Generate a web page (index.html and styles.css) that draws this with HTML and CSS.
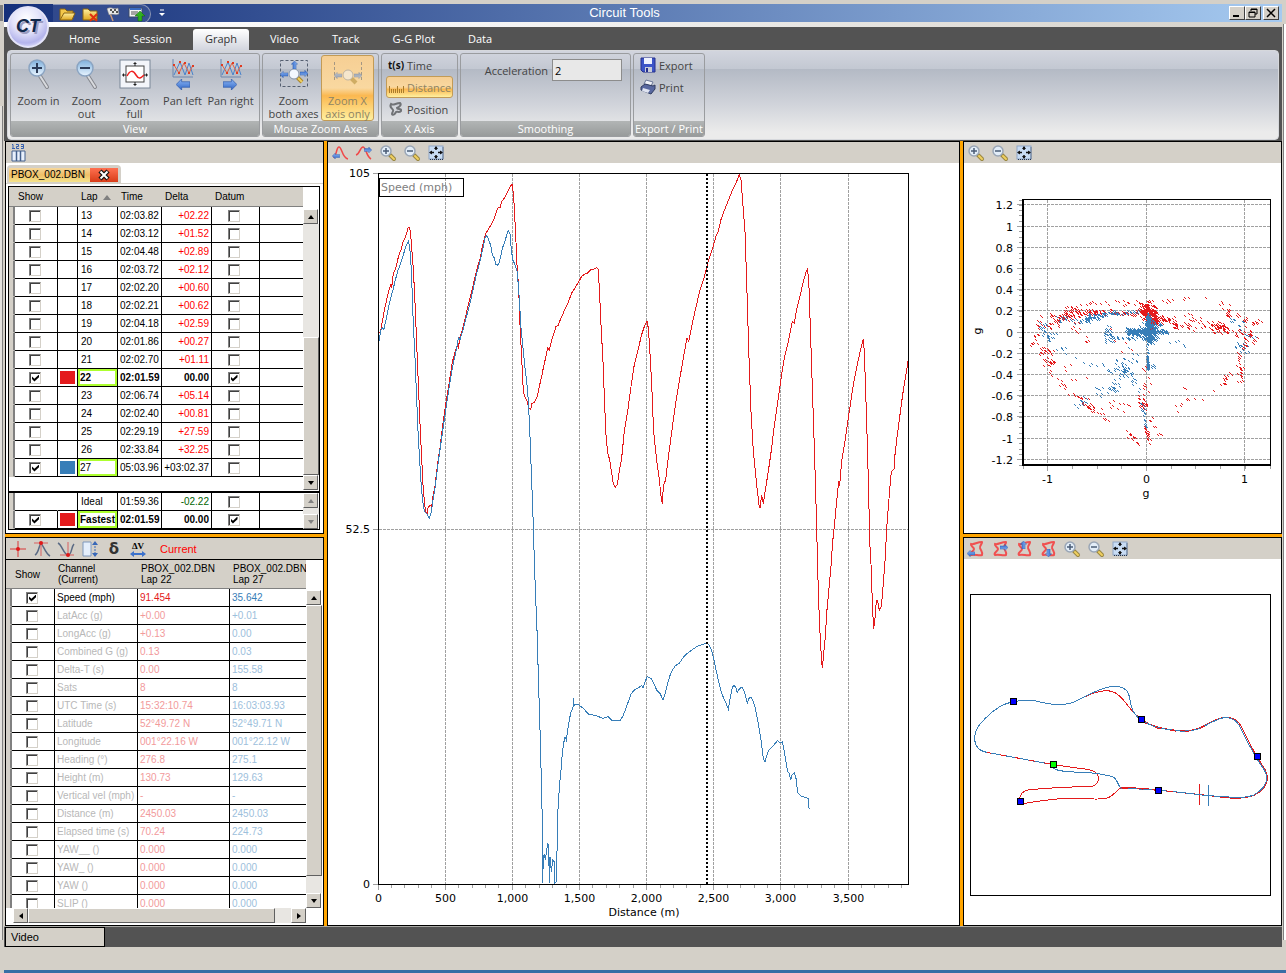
FILE: index.html
```html
<!DOCTYPE html>
<html lang="en">
<head>
  <meta charset="UTF-8" />
  <title>Circuit Tools</title>
  <link rel="stylesheet" href="styles.css">
</head>
<body>
  <!-- Shared icons -->
  <svg class="icon-defs" aria-hidden="true">
    <defs>
      <linearGradient id="g-lens" x1="0" y1="0" x2="0" y2="1"><stop offset="0" stop-color="#7fb0dc"/><stop offset="1" stop-color="#e8f4ff"/></linearGradient>
      <linearGradient id="g-blue" x1="0" y1="0" x2="0" y2="1"><stop offset="0" stop-color="#8fb8f4"/><stop offset="1" stop-color="#2f66c8"/></linearGradient>
      <linearGradient id="g-folder" x1="0" y1="0" x2="0" y2="1"><stop offset="0" stop-color="#fff0a0"/><stop offset="1" stop-color="#e0a820"/></linearGradient>
      <radialGradient id="g-orb" cx="0.45" cy="0.3" r="0.75"><stop offset="0" stop-color="#ffffff"/><stop offset="0.45" stop-color="#e4e4fa"/><stop offset="0.8" stop-color="#b4b4ec"/><stop offset="1" stop-color="#e8e8ff"/></radialGradient>
    </defs>
    <symbol id="i-big-lens" viewBox="0 0 32 32">
      <path d="M17 18l7 11" stroke="#85878d" stroke-width="4" stroke-linecap="round"/>
      <path d="M17 18l7 11" stroke="#d8dade" stroke-width="2" stroke-linecap="round"/>
      <circle cx="14" cy="10" r="8" fill="url(#g-lens)" stroke="#8ba4c2" stroke-width="1.500"/>
    </symbol>
    <symbol id="i-lens" viewBox="0 0 18 18">
      <path d="M11 11l4 4" stroke="#9a8740" stroke-width="4" stroke-linecap="round"/>
      <path d="M12 12l3 3" stroke="#f0d060" stroke-width="2" stroke-linecap="round"/>
      <circle cx="7" cy="7" r="5" fill="#e2edf8" stroke="#9aa6b6" stroke-width="1.500"/>
    </symbol>
    <symbol id="i-zoom-in" viewBox="0 0 18 18"><use href="#i-lens"/><path d="M4 7h6M7 4v6" stroke="#4a5c76" stroke-width="1.500"/></symbol>
    <symbol id="i-zoom-out" viewBox="0 0 18 18"><use href="#i-lens"/><path d="M4 7h6" stroke="#4a5c76" stroke-width="1.500"/></symbol>
    <symbol id="i-fit" viewBox="0 0 18 18">
      <rect x="2" y="2" width="14" height="13" fill="#c8dcf4" stroke="#8fa6c6"/>
      <path d="M3 15.500h13v-13" fill="none" stroke="#1f3350" stroke-dasharray="1 1"/>
      <path d="M9 3v3M9 11v3M3 8.500h4M11 8.500h4" stroke="#111" stroke-width="1.500"/>
      <path d="M9 2l2 3H7zM9 15l2-3H7zM2 8.500l3-2v4zM16 8.500l-3-2v4z" fill="#111"/>
    </symbol>
    <symbol id="i-track" viewBox="0 0 18 18">
      <path d="M4 4c3 1 6-2 11-2c1 1-3 4-2 6c1 3 3 4 2 7c-3 1-7-1-11 0c-2-2 3-4 3-6c0-2-4-3-3-5z" fill="none" stroke="#f05050" stroke-width="2"/>
    </symbol>
    <symbol id="i-arrow" viewBox="0 0 10 8"><path d="M0 4l4-4v2h6v4H4v2z" fill="url(#g-blue)" stroke="#2b58a8" stroke-width=".5"/></symbol>
    <symbol id="i-pan-graph" viewBox="0 0 24 20">
      <path d="M2 0v18h20" fill="none" stroke="#6f87ae"/>
      <path d="M3 16l6-13l5 13l4-12l4 12" fill="none" stroke="#4a84cc"/>
      <path d="M3 6l5 8l5-10l5 10l4-8" fill="none" stroke="#e06040"/>
      <path d="M2 5h2v2H2zM7 13h2v2H7zM13 3h2v2h-2zM17 13h2v2h-2zM21 6h2v2h-2zM8 2h2v2H8z" fill="#e03a20"/>
    </symbol>
  </svg>

  <header class="titlebar">
    <nav class="quick">
      <button type="button" aria-label="Open"><svg viewBox="0 0 17 16"><path d="M1 14V3h5l2 2h6v3" fill="#f4c84a" stroke="#8a6410"/><path d="M1 14l4-7h11l-3 7z" fill="url(#g-folder)" stroke="#8a6410"/></svg></button>
      <button type="button" aria-label="Close file"><svg viewBox="0 0 17 16"><path d="M1 14V3h5l2 2h7v9z" fill="url(#g-folder)" stroke="#8a6410"/><path d="M8 8l7 7M15 8l-7 7" stroke="#e03010" stroke-width="2"/></svg></button>
      <button type="button" aria-label="Start line"><svg viewBox="0 0 17 16"><path d="M3 2l5 13" stroke="#c89878" stroke-width="1.500"/><path d="M2 3c4-3 6 1 11-1l1 6c-4 2-6-1-10 1z" fill="#e8e8e8" stroke="#777" stroke-width=".5"/><path d="M5 3h2v2H5zM9 3h2v2H9zM7 5h2v2H7zM11 5h2v2h-2z" fill="#555"/></svg></button>
      <button type="button" aria-label="Export list"><svg viewBox="0 0 17 16"><rect x="1" y="2" width="13" height="9" fill="#f4f4f4" stroke="#3a4a68"/><path d="M2 3h11" stroke="#3a6ac0" stroke-width="2"/><path d="M3 6h7M3 8h6" stroke="#555"/><path d="M12 5l5 5h-3v5h-4v-5H7z" fill="#30b020" stroke="#106008" stroke-width=".5"/></svg></button>
    </nav>
    <button class="quick-more" type="button" aria-label="Customise"><svg viewBox="0 0 8 8"><path d="M2 1h4" stroke="#fff"/><path d="M1 4h6l-3 3z" fill="#fff"/></svg></button>
    <h1>Circuit Tools</h1>
    <div class="win-buttons">
      <button type="button" aria-label="Minimise"><svg viewBox="0 0 12 10"><path d="M2 8h6" stroke="#000" stroke-width="2"/></svg></button>
      <button type="button" aria-label="Restore"><svg viewBox="0 0 12 10"><path d="M4 3V1h6v5H8M4 1.500h6M2 9V4h6v5zM2 4.500h6" fill="none" stroke="#000"/></svg></button>
      <button class="win-close" type="button" aria-label="Close"><svg viewBox="0 0 12 10"><path d="M2 1l8 8M10 1l-8 8" stroke="#000" stroke-width="1.500"/></svg></button>
    </div>
  </header>
  <button class="orb" type="button" aria-label="Application menu">
    <svg viewBox="0 0 42 42">
      <circle cx="21" cy="21" r="20" fill="url(#g-orb)" stroke="#e4e4f8" stroke-width="2"/>
      <text x="23" y="28" class="orb-shadow">CT</text>
      <text x="21" y="26" class="orb-text">CT</text>
    </svg>
  </button>
  <div class="glow"></div>

  <nav class="tabs">
    <button type="button">Home</button>
    <button type="button">Session</button>
    <button type="button" class="active">Graph</button>
    <button type="button">Video</button>
    <button type="button">Track</button>
    <button type="button">G-G Plot</button>
    <button type="button">Data</button>
  </nav>

  <div class="ribbon-wrap">
    <div class="ribbon">
      <section class="group view">
        <div class="tools">
          <button class="big" type="button"><svg viewBox="0 0 32 32"><use href="#i-big-lens"/><path d="M9 10h10M14 5v10" stroke="#2c3c58" stroke-width="2"/></svg><span>Zoom in</span></button>
          <button class="big" type="button"><svg viewBox="0 0 32 32"><use href="#i-big-lens"/><path d="M9 10h10" stroke="#2c3c58" stroke-width="2"/></svg><span>Zoom out</span></button>
          <button class="big" type="button"><svg viewBox="0 0 32 32"><rect x="1" y="2" width="30" height="28" fill="#f3f5fa" stroke="#7b8798"/><rect x="7" y="8" width="18" height="16" fill="#fff" stroke="#444"/><path d="M8 18c3-6 6-6 9-1s5 3 8 0" fill="none" stroke="#f02020" stroke-width="1.500"/><path d="M16 4v4M16 24v4M3 17h4M25 17h4M14.500 5.500h3M14.500 26.500h3M4.500 15.500v3M27.500 15.500v3" stroke="#222"/></svg><span>Zoom full</span></button>
          <button class="big" type="button"><svg viewBox="0 0 32 32"><use href="#i-pan-graph" x="4" y="1" width="24" height="20"/><use href="#i-arrow" x="9" y="21" width="14" height="11"/></svg><span>Pan left</span></button>
          <button class="big" type="button"><svg viewBox="0 0 32 32"><use href="#i-pan-graph" x="4" y="1" width="24" height="20"/><g transform="translate(22 21) scale(-1 1)"><use href="#i-arrow" width="14" height="11"/></g></svg><span>Pan&nbsp;right</span></button>
        </div>
        <h2>View</h2>
      </section>
      <section class="group mouse">
        <div class="tools">
          <button class="big wide" type="button"><svg viewBox="0 0 32 32"><rect x="2.500" y="2.500" width="27" height="26" fill="none" stroke="#555f70" stroke-dasharray="3 2"/><path d="M19 19l5 5" stroke="#a8842a" stroke-width="4"/><path d="M20 20l4 4" stroke="#f0d060" stroke-width="2"/><circle cx="16" cy="16" r="5" fill="#f4f8ff" stroke="#8794a8"/><use href="#i-arrow" x="2" y="13" width="8" height="7"/><g transform="rotate(180 26 16)"><use href="#i-arrow" x="22" y="13" width="8" height="7"/></g><g transform="rotate(90 16 7)"><use href="#i-arrow" x="12" y="3" width="8" height="7"/></g></svg><span>Zoom both axes</span></button>
          <button class="big wide on" type="button"><svg viewBox="0 0 32 32"><path d="M2.500 4v18M29.500 4v18" stroke="#555f70" stroke-dasharray="3 2"/><path d="M19 20l5 5" stroke="#a8842a" stroke-width="4"/><circle cx="16" cy="17" r="5" fill="#f4f8ff" stroke="#8794a8"/><use href="#i-arrow" x="2" y="14" width="8" height="7"/><g transform="rotate(180 26 17)"><use href="#i-arrow" x="22" y="13" width="8" height="7"/></g></svg><span>Zoom X axis only</span></button>
        </div>
        <h2>Mouse Zoom Axes</h2>
      </section>
      <section class="group xaxis">
        <div class="stack">
          <button type="button"><b class="ts">t(s)</b>Time</button>
          <button type="button" class="on"><svg viewBox="0 0 16 16"><path d="M1.500 7v7M3.500 10v4M5.500 10v4M7.500 10v4M9.500 7v7M11.500 10v4M13.500 10v4M15.500 7v7" fill="none" stroke="#a87c2c"/></svg>Distance</button>
          <button type="button"><svg viewBox="0 0 16 16"><path d="M3 3c2 2 5-1 9-1c2 2-1 4-3 5c0 2 5 0 4 3c-2 2-4 0-5 1c-1 2-3 4-4 2c0-2 2-3 1-4c-1-2-4-3-2-6z" fill="none" stroke="#707276" stroke-width="2"/></svg>Position</button>
        </div>
        <h2>X Axis</h2>
      </section>
      <section class="group smooth">
        <div class="field">
          <label for="accel">Acceleration</label>
          <input id="accel" type="text" value="2">
        </div>
        <h2>Smoothing</h2>
      </section>
      <section class="group export">
        <div class="stack">
          <button type="button"><svg viewBox="0 0 16 16"><path d="M1 1h14v14H3l-2-2z" fill="#3c55c8" stroke="#26308c"/><path d="M4 1h8v6H4z" fill="#eef2ff"/><path d="M5 10h7v5H5z" fill="#c8ccd8"/><path d="M6 11h2v4H6z" fill="#26308c"/></svg>Export</button>
          <button type="button"><svg viewBox="0 0 16 16"><path d="M6 1l7 2l-2 4l-7-2z" fill="#f0f2f8" stroke="#6b7898"/><path d="M1 8l4-3l8 2l2-1v4l-4 5l-10-4z" fill="#5868a0" stroke="#303c60"/><path d="M3 9l7 2l-2 3l-6-2z" fill="#dfe4f2"/></svg>Print</button>
        </div>
        <h2>Export / Print</h2>
      </section>
    </div>
  </div>

  <main>
    <section class="panel laps">
      <div class="toolbar">
        <button type="button" aria-label="Columns"><svg viewBox="0 0 18 18"><path d="M3 .5h1v3.500M3 4.500h3M7 .5h2.500v2h-2v2H10M12 .5h2.500v4H12M12 2.500h2" fill="none" stroke="#3560b0"/><path d="M3 7h13v10H3z" fill="#e8f0fc" stroke="#44608c"/><path d="M7.500 7v10M11.500 7v10" stroke="#44608c" stroke-width="1.500"/></svg></button>
      </div>
      <div class="file-tabs">
        <div class="file-tab">
          <span>PBOX_002.DBN</span>
          <button type="button" aria-label="Close tab"><svg viewBox="0 0 12 12"><path d="M2 2l8 8M10 2l-8 8" stroke="#111" stroke-width="4.500"/><path d="M2.500 2.500l7 7M9.500 2.500l-7 7" stroke="#fff" stroke-width="2"/></svg></button>
        </div>
      </div>
      <div class="lap-frame">
        <div class="lap-main">
          <table class="lap-table">
            <colgroup><col class="c-edge"><col class="c-show"><col class="c-sw"><col class="c-lap"><col class="c-time"><col class="c-delta"><col class="c-datum"><col></colgroup>
            <thead><tr><th></th><th>Show</th><th></th><th>Lap <i class="sort"></i></th><th>Time</th><th>Delta</th><th>Datum</th><th></th></tr></thead>
            <tbody id="lap-rows"></tbody>
          </table>
          <div class="vscroll under-head">
            <button type="button" class="up" aria-label="Scroll up"></button>
            <div class="track lap-track"><div class="thumb"></div></div>
            <button type="button" class="down" aria-label="Scroll down"></button>
          </div>
        </div>
        <div class="lap-foot">
          <table class="lap-table">
            <colgroup><col class="c-edge"><col class="c-show"><col class="c-sw"><col class="c-lap"><col class="c-time"><col class="c-delta"><col class="c-datum"><col></colgroup>
            <tbody id="foot-rows"></tbody>
          </table>
          <div class="vscroll off">
            <button type="button" class="up" aria-label="Scroll up" disabled></button>
            <div class="track"></div>
            <button type="button" class="down" aria-label="Scroll down" disabled></button>
          </div>
        </div>
      </div>
    </section>

    <section class="panel channels">
      <div class="toolbar">
        <button type="button" aria-label="Cursor"><svg viewBox="0 0 18 18"><path d="M1 9h16M9 1v16" stroke="#d83838"/><circle cx="9" cy="9" r="2" fill="#e01818"/></svg></button>
        <button type="button" aria-label="Maximum"><svg viewBox="0 0 18 18"><path d="M2 15c4-2 4-11 6-11s4 9 9 12" fill="none" stroke="#5a6a84" stroke-width="1.500"/><path d="M1 3h14M8 3v13" stroke="#d86060"/><circle cx="8" cy="3" r="2" fill="#e01818"/></svg></button>
        <button type="button" aria-label="Minimum"><svg viewBox="0 0 18 18"><path d="M1 3c4 2 6 12 10 12s3-8 6-11" fill="none" stroke="#5a6a84" stroke-width="1.500"/><path d="M3 15h14M11 2v14" stroke="#d86060"/><circle cx="11" cy="15" r="2" fill="#e01818"/></svg></button>
        <button type="button" aria-label="Range"><svg viewBox="0 0 18 18"><path d="M2 2h8v14H2z" fill="#e4eefb" stroke="#7f98bc"/><path d="M14 3v12" stroke="#3868b8" stroke-dasharray="2 1"/><path d="M14 1l3 4h-6zM14 17l3-4h-6z" fill="#3868b8"/></svg></button>
        <button type="button" class="delta-btn">δ</button>
        <button type="button" class="dv-btn">ΔV<svg viewBox="0 0 16 6"><path d="M0 3l4-3v2h8V0l4 3l-4 3V4H4v2z" fill="#3c72cc"/></svg></button>
        <span class="current">Current</span>
      </div>
      <div class="chan-body">
        <div class="chan-main">
          <div class="chan-clip">
            <table class="chan-table">
              <colgroup><col class="c-edge"><col class="c-show"><col class="c-name"><col class="c-v1"><col></colgroup>
              <thead><tr><th></th><th>Show</th><th>Channel<br>(Current)</th><th>PBOX_002.DBN<br>Lap 22</th><th>PBOX_002.DBN<br>Lap 27</th></tr></thead>
              <tbody id="chan-rows"></tbody>
            </table>
          </div>
          <div class="vscroll under-chan">
            <button type="button" class="up" aria-label="Scroll up"></button>
            <div class="track chan-track"><div class="thumb"></div></div>
            <button type="button" class="down" aria-label="Scroll down"></button>
          </div>
        </div>
        <div class="hscroll">
          <button type="button" class="left" aria-label="Scroll left"></button>
          <div class="track"><div class="thumb"></div></div>
          <button type="button" class="right" aria-label="Scroll right"></button>
        </div>
      </div>
    </section>

    <section class="panel speed">
      <div class="toolbar">
        <button type="button" aria-label="Previous peak"><svg viewBox="0 0 18 18"><path d="M2 13c4 0 3-10 6-10s3 11 9 12" fill="none" stroke="#f04848" stroke-width="1.500"/><use href="#i-arrow" x="1" y="9" width="8" height="6"/></svg></button>
        <button type="button" aria-label="Next peak"><svg viewBox="0 0 18 18"><path d="M1 11c4-1 4-8 7-8s3 9 8 12" fill="none" stroke="#f04848" stroke-width="1.500"/><g transform="rotate(180 13 6)"><use href="#i-arrow" x="9" y="3" width="8" height="6"/></g></svg></button>
        <button type="button" aria-label="Zoom in"><svg><use href="#i-zoom-in"/></svg></button>
        <button type="button" aria-label="Zoom out"><svg><use href="#i-zoom-out"/></svg></button>
        <button type="button" aria-label="Zoom full"><svg><use href="#i-fit"/></svg></button>
      </div>
      <svg class="plot" id="speed-plot" viewBox="328 163 631 762">
        <g id="speed-grid"></g>
        <rect x="379" y="178" width="84" height="18" class="label-box"/>
        <text x="381" y="191" class="muted">Speed (mph)</text>
        <g transform="translate(325 138) scale(.33333)">
          <polyline class="trace red" points="163,585 167,578 172,550 178,518 184,490 189,468 194,450 198,438 200,450 203,420 207,402 213,388 218,365 224,345 229,335 233,315 240,300 245,285 250,268 254,270 257,290 260,330 264,380 268,450 272,540 276,640 281,760 286,880 290,960 294,1040 299,1100 303,1122 306,1128 310,1106 315,1103 320,1105 324,1075 330,1045 338,975 345,930 352,870 362,800 372,738 382,672 392,635 397,620 400,632 404,602 412,575 422,535 430,500 440,462 448,425 456,392 466,360 472,325 482,288 492,270 500,258 508,240 515,220 520,207 525,210 530,190 540,178 548,160 556,146 561,138 565,165 568,210 572,290 576,380 581,450 585,560 590,660 595,760 600,778 607,790 611,812 617,814 621,796 629,792 636,778 642,750 650,715 657,680 663,655 668,630 673,637 680,605 688,582 693,565 700,562 706,545 715,525 722,508 730,492 740,465 750,450 762,430 770,415 780,408 788,405 798,394 808,393 815,388 819,393 823,450 828,560 834,670 839,800 843,890 848,945 854,965 860,1005 865,1038 870,1048 877,1040 882,1005 890,960 898,880 908,820 916,760 926,690 938,640 950,590 960,560 966,550 969,565 973,610 978,700 983,800 985,870 990,920 996,975 1003,1025 1008,1075 1012,1097 1015,1045 1022,1025 1028,975 1035,920 1043,860 1053,790 1063,730 1075,660 1086,600 1091,610 1097,580 1110,520 1125,455 1137,420 1148,375 1160,340 1173,295 1180,280 1188,245 1200,212 1213,180 1225,150 1235,130 1243,110 1248,125 1253,190 1260,280 1265,430 1272,660 1278,820 1285,940 1295,1040 1302,1100 1305,1110 1310,1072 1315,1097 1320,1062 1330,1000 1340,930 1347,870 1360,780 1370,710 1377,665 1390,610 1402,550 1408,555 1415,515 1425,475 1435,430 1443,403 1447,395 1451,420 1456,570 1462,750 1468,930 1472,1060 1475,1170 1479,1326 1482,1416 1486,1506 1489,1556 1492,1591 1496,1546 1501,1496 1505,1426 1512,1351 1518,1286 1523,1211 1528,1165 1533,1110 1541,1030 1544,1043 1550,970 1560,910 1570,840 1585,740 1600,665 1609,625 1615,604 1618,640 1623,790 1628,950 1633,1150 1635,1226 1639,1296 1642,1396 1646,1474 1651,1431 1653,1401 1656,1386 1659,1396 1663,1416 1669,1406 1675,1336 1681,1256 1685,1170 1693,1070 1698,1010 1702,997 1707,995 1710,950 1717,890 1725,830 1733,770 1742,715 1749,670"/>
          <polyline class="trace blue" points="162,610 168,575 173,570 177,574 182,550 188,520 196,485 204,455 210,430 218,400 226,378 235,350 243,325 250,310 254,325 258,380 261,450 265,560 270,660 274,760 280,900 286,1000 290,1060 296,1110 300,1122 305,1126 309,1135 313,1140 318,1125 322,1100 330,1050 340,970 350,900 360,830 372,750 384,680 394,635 400,600 405,605 414,575 424,537 434,500 444,455 454,410 464,375 474,330 480,300 484,292 490,302 497,322 502,350 508,360 512,378 517,382 522,376 528,350 533,328 540,310 546,287 550,278 555,288 558,325 563,365 570,380 576,400 580,440 584,500 588,570 594,630 600,690 606,740 610,790 613,850 616,920 620,1030 623,1100 626,1206 628,1266 631,1356 636,1476 641,1646 646,1806 651,2006 653,2236 655,2156 658,2151 661,2166 665,2136 668,2116 671,2126 673,2236 675,2156 679,2201 683,2166 688,2171 690,2236 694,2231 696,2144 698,2026 701,1986 703,1946 708,1896 712,1846 716,1816 720,1796 724,1806 728,1776 733,1746 738,1721 744,1709 745,1681 746,1706 750,1698 762,1701 775,1711 790,1728 800,1730 815,1734 835,1741 850,1736 862,1748 885,1748 893,1736 903,1711 910,1691 918,1668 928,1656 940,1649 950,1643 954,1649 960,1631 967,1616 978,1621 987,1638 995,1656 1005,1666 1014,1686 1020,1669 1028,1636 1037,1606 1050,1584 1063,1576 1075,1558 1087,1546 1103,1534 1120,1523 1145,1516 1153,1521 1162,1544 1170,1581 1180,1626 1190,1666 1203,1696 1210,1713 1217,1671 1223,1646 1228,1642 1233,1651 1237,1664 1244,1651 1251,1648 1258,1661 1267,1696 1273,1679 1280,1679 1290,1706 1300,1756 1308,1806 1315,1861 1320,1871 1330,1838 1343,1826 1357,1808 1365,1814 1372,1812 1379,1846 1388,1901 1393,1906 1397,1926 1401,1912 1408,1904 1413,1921 1418,1964 1427,1974 1450,1981 1451,2009 1455,2011"/>
        </g>
        <path d="M707 174v710" class="cursor"/>
        <text x="644" y="916" class="mid">Distance (m)</text>
      </svg>
    </section>

    <section class="panel gg">
      <div class="toolbar">
        <button type="button" aria-label="Zoom in"><svg><use href="#i-zoom-in"/></svg></button>
        <button type="button" aria-label="Zoom out"><svg><use href="#i-zoom-out"/></svg></button>
        <button type="button" aria-label="Zoom full"><svg><use href="#i-fit"/></svg></button>
      </div>
      <svg class="plot" viewBox="964 163 317 370">
        <g id="gg-grid"></g>
        <path id="gg-red" class="dots red"/>
        <path id="gg-blue" class="dots blue"/>
        <text x="1146" y="497" class="mid">g</text>
        <text transform="translate(981 331) rotate(-90)" class="mid">g</text>
      </svg>
    </section>

    <section class="panel map">
      <div class="toolbar">
        <button type="button" aria-label="Pan left"><svg viewBox="0 0 18 18"><use href="#i-track"/><use href="#i-arrow" x="0" y="10" width="8" height="7"/></svg></button>
        <button type="button" aria-label="Pan right"><svg viewBox="0 0 18 18"><use href="#i-track"/><g transform="rotate(180 13 8)"><use href="#i-arrow" x="9" y="5" width="8" height="7"/></g></svg></button>
        <button type="button" aria-label="Pan up"><svg viewBox="0 0 18 18"><use href="#i-track"/><g transform="rotate(90 9 5)"><use href="#i-arrow" x="5" y="2" width="8" height="7"/></g></svg></button>
        <button type="button" aria-label="Pan down"><svg viewBox="0 0 18 18"><use href="#i-track"/><g transform="rotate(-90 9 13)"><use href="#i-arrow" x="5" y="10" width="8" height="7"/></g></svg></button>
        <button type="button" aria-label="Zoom in"><svg><use href="#i-zoom-in"/></svg></button>
        <button type="button" aria-label="Zoom out"><svg><use href="#i-zoom-out"/></svg></button>
        <button type="button" aria-label="Zoom full"><svg><use href="#i-fit"/></svg></button>
      </div>
      <svg class="plot" viewBox="964 559 317 366">
        <rect x="970.500" y="594.500" width="300" height="301" class="map-box"/>
        <g transform="translate(960 530) scale(.33333)">
          <path class="trace red" d="M280 704L80 667C55 662 43 645 44 620C46 595 60 582 75 566C95 545 120 522 160 515C190 510 225 510 245 517C275 525 320 527 345 515C375 500 390 491 410 487C440 478 460 482 475 495C495 512 505 530 520 547L545 570C577 590 610 597 660 602C700 604 720 595 745 580C775 565 785 561 802 562C832 565 842 583 852 605C864 632 885 670 897 690C912 715 921 720 922 742C922 770 902 786 882 796C850 808 820 806 780 801C720 793 680 790 640 785C590 780 530 770 482 774C465 785 455 803 440 804C420 810 395 806 370 806L310 805C280 808 240 812 190 821L178 815C178 795 185 783 205 780C260 773 330 771 395 769C412 766 416 752 415 742C412 722 390 718 350 714L280 704M718 763V825"/>
          <path class="trace blue" d="M280 704L80 667C55 662 43 645 44 620C46 595 60 582 75 566C95 545 120 522 160 515C190 510 225 510 245 517C275 525 320 527 345 515C375 500 395 488 430 475C455 467 475 468 490 474C510 485 508 505 513 525C518 550 530 560 545 570C575 592 610 598 660 603C700 605 720 597 745 582C775 567 785 562 802 563C830 567 838 585 848 607C860 635 885 675 893 690C905 710 918 720 921 742C919 770 900 785 880 796C850 806 820 802 780 799C720 797 680 788 640 785C590 780 530 776 482 774C474 768 472 742 455 739C420 730 400 730 385 728C350 726 330 727 300 722C285 719 276 715 280 704M745 765V827"/>
          <path class="trace red overlap" d="M270 702L80 667M545 573C577 594 610 601 660 604C700 605 720 597 745 582M640 786C590 781 530 774 482 774"/>
        </g>
        <g class="marker">
          <rect x="1010.500" y="698.500" width="6" height="6"/>
          <rect x="1138.500" y="716.500" width="6" height="6"/>
          <rect x="1254.500" y="753.500" width="6" height="6"/>
          <rect x="1155.500" y="787.500" width="6" height="6"/>
          <rect x="1017.500" y="798.500" width="6" height="6"/>
          <rect x="1050.500" y="761.500" width="6" height="6" class="start"/>
        </g>
      </svg>
    </section>
  </main>

  <footer class="dock"><button type="button">Video</button></footer>
  <div class="bottom-edge"></div>

  <script src="app.js"></script>
</body>
</html>
```

FILE: styles.css
```css
* {
  box-sizing: border-box;
}

body {
  margin: 0;
  padding: 4px 4px 0;
  min-height: 100vh;
  display: flex;
  flex-direction: column;
  position: relative;
  background:
    linear-gradient(#808080, #808080) 0 5px / 3px 16px no-repeat,
    linear-gradient(to right, #e4e2de 2px, #808080 2px) 0 106px / 3px 834px no-repeat,
    linear-gradient(to right, #808080 1px, #fff 1px) right 24px / 3px 916px no-repeat,
    #d4d0c8;
  font-family: "Liberation Sans", Arial, sans-serif;
  font-size: 10px;
  color: #000;
}

button {
  font: inherit;
  color: inherit;
  padding: 0;
  border: none;
  background: none;
}

h1, h2 {
  margin: 0;
  font-weight: normal;
}

.icon-defs {
  position: absolute;
  width: 0;
  height: 0;
}

/* Title bar */
.titlebar {
  height: 18px;
  padding: 0 3px 0 49px;
  display: flex;
  align-items: center;
  background: linear-gradient(to right, #16307a, #a6caf0);
}

.quick {
  width: 98px;
  height: 20px;
  padding: 0 6px;
  display: flex;
  gap: 6px;
  align-self: flex-start;
  align-items: center;
  border: 1px solid #8c96b4;
  border-left: none;
  border-radius: 0 10px 10px 0;
  background-color: rgba(90, 110, 165, 0.35);
}

.quick button,
.quick svg {
  display: block;
  width: 17px;
  height: 16px;
}

.quick-more svg {
  display: block;
  margin-left: 7px;
  width: 8px;
  height: 8px;
}

.titlebar h1 {
  flex: 1;
  padding-right: 146px;
  text-align: center;
  font-size: 13px;
  line-height: 20px;
  color: #fff;
}

.win-buttons {
  display: flex;
}

.win-buttons button {
  width: 16px;
  height: 14px;
  background-color: #d4d0c8;
  border: 1px solid;
  border-color: #fff #404040 #404040 #fff;
}

.win-buttons .win-close {
  margin-left: 2px;
}

.win-buttons svg {
  display: block;
  width: 12px;
  height: 10px;
  margin: 0 auto;
}

.orb {
  position: absolute;
  left: 7px;
  top: 6px;
  width: 42px;
  height: 42px;
}

.orb svg {
  display: block;
}

.orb text {
  font: italic bold 18px "Liberation Sans", Arial, sans-serif;
  text-anchor: middle;
}

.orb-shadow {
  fill: #9c9cc0;
}

.orb-text {
  fill: #10284a;
}

.glow {
  height: 5px;
  background: linear-gradient(to right, #fff, #f4f4f4 40%, #d4d0c8);
}

/* Ribbon */
.tabs {
  height: 23px;
  padding: 2px 0 0 53px;
  display: flex;
  gap: 9px;
  background-color: #535353;
  font-family: "Open Sans", "Noto Sans", sans-serif;
  font-size: 11px;
  color: #fff;
}

.tabs button {
  height: 21px;
  padding: 0 12px 2px;
  border-radius: 3px 3px 0 0;
}

.tabs .active {
  color: #333;
  background: linear-gradient(#fff, #d2d5de);
}

.ribbon-wrap {
  padding: 0 3px 1px;
  background-color: #535353;
}

.ribbon {
  height: 90px;
  padding: 2px;
  display: flex;
  gap: 2px;
  align-items: stretch;
  border: 1px solid #d6d8dc;
  border-radius: 4px;
  background: linear-gradient(#d2d5de, #c3c8d2 20%, #b4bac5 21%, #d0d3da 60%, #ebebeb 92%);
  font-family: "Open Sans", "Noto Sans", sans-serif;
  font-size: 11px;
  line-height: 13px;
  color: #444;
}

.group {
  display: flex;
  flex-direction: column;
  justify-content: space-between;
  border: 1px solid #9a9c9f;
  border-radius: 3px;
  overflow: hidden;
}

.group h2 {
  height: 15px;
  flex: none;
  font-size: 11px;
  line-height: 15px;
  text-align: center;
  white-space: nowrap;
  color: #fff;
  background: linear-gradient(#b2b5b5, #989b9b);
}

.view { width: 250px; }
.mouse { width: 117px; }
.xaxis { width: 77px; }
.smooth { width: 171px; }
.export { width: 72px; }

.tools {
  display: flex;
  padding: 1px 4px 0;
  gap: 1px;
}

.big {
  width: 47px;
  height: 66px;
  display: flex;
  flex-direction: column;
  align-items: center;
  border: 1px solid transparent;
  border-radius: 3px;
}

.big.wide {
  width: 53px;
}

.big svg {
  width: 32px;
  height: 32px;
  margin: 2px 0 4px;
  flex: none;
}

.big.on,
.stack .on {
  color: #8d8464;
  border: 1px solid #c29b56;
  background: linear-gradient(#f6cf94, #f9d8a0 50%, #fbb850 62%, #fff0a0);
}

.big.on svg {
  opacity: 0.5;
}

.stack {
  padding: 0 4px;
  display: flex;
  flex-direction: column;
}

.stack button {
  height: 22px;
  padding: 0 1px;
  display: flex;
  align-items: center;
  gap: 3px;
  border: 1px solid transparent;
  border-radius: 3px;
}

.stack svg {
  width: 16px;
  height: 16px;
  flex: none;
}

.ts {
  width: 16px;
  font-size: 10px;
  color: #111;
}

.field {
  padding: 5px 8px;
  display: flex;
  justify-content: flex-end;
  align-items: center;
  gap: 4px;
}

.field input {
  width: 70px;
  height: 22px;
  padding: 0 2px;
  border: 1px solid #8c8c8c;
  background-color: #e8e8e8;
  font: 11px "Open Sans", sans-serif;
}

/* Panels */
main {
  flex: 1 1 785px;
  min-height: 0;
  margin-left: 1px;
  display: grid;
  grid-template-columns: 319px minmax(0, 1fr) 319px;
  grid-template-rows: minmax(0, 393fr) minmax(0, 389fr);
  grid-template-areas: "laps speed gg" "channels speed map";
  gap: 3px;
  background-color: #ffa500;
}

.panel {
  display: flex;
  flex-direction: column;
  border: 1px solid #000;
  background-color: #fff;
  overflow: hidden;
}

.laps { grid-area: laps; }
.channels { grid-area: channels; }
.speed { grid-area: speed; }
.gg { grid-area: gg; }
.map { grid-area: map; }

.toolbar {
  height: 21px;
  flex: none;
  display: flex;
  align-items: center;
  background-color: #d4d0c8;
}

.toolbar button {
  width: 24px;
  height: 20px;
  display: flex;
  align-items: center;
  justify-content: center;
}

.toolbar svg {
  width: 18px;
  height: 18px;
}

.toolbar .delta-btn {
  font: bold 15px "DejaVu Sans", sans-serif;
  color: #333;
}

.toolbar .dv-btn {
  flex-direction: column;
  font: bold 9px "Liberation Serif", serif;
}

.toolbar .dv-btn svg {
  width: 16px;
  height: 6px;
}

.current {
  margin-left: 10px;
  font-size: 11px;
  color: #f00;
}

/* File tab */
.file-tabs {
  height: 21px;
  padding: 2px 1px 0;
  border-bottom: 1px solid #d4d0c8;
}

.file-tab {
  width: 114px;
  height: 19px;
  padding: 3px 3px 2px 2px;
  display: flex;
  justify-content: space-between;
  border-radius: 4px 4px 0 0;
  background-color: #d4d0c8;
}

.file-tab span {
  flex: 1;
  padding-left: 2px;
  line-height: 14px;
  background: linear-gradient(#f6d79c, #efbf66 50%, #f5e48c);
}

.file-tab button {
  width: 28px;
  background: linear-gradient(#ff7050, #d83c18);
}

.file-tab svg {
  display: block;
  width: 12px;
  height: 12px;
  margin: 0 auto;
}

/* Tables */
.lap-frame {
  flex: 1;
  margin: 2px 3px 3px 2px;
  border: 1px solid #000;
  display: flex;
  flex-direction: column;
  justify-content: space-between;
}

.lap-main,
.lap-foot {
  display: flex;
}

.lap-foot {
  border-top: 2px solid #000;
}

table {
  border-collapse: separate;
  border-spacing: 0;
  table-layout: fixed;
}

.lap-table { width: 294px; }
.chan-table { width: 300px; }
.c-edge { width: 6px; }
.c-show { width: 43px; }
.c-sw { width: 20px; }
.c-lap { width: 40px; }
.c-time { width: 44px; }
.c-delta { width: 50px; }
.c-datum { width: 48px; }
.c-name { width: 83px; }
.c-v1 { width: 92px; }

th {
  height: 20px;
  padding: 0 3px;
  font-weight: normal;
  text-align: left;
  white-space: nowrap;
  background-color: #d4d0c8;
  border-bottom: 1px solid #808080;
}

.chan-table th {
  height: 29px;
  line-height: 11px;
  overflow: hidden;
}

td {
  height: 18px;
  padding: 0 3px;
  line-height: 12px;
  white-space: nowrap;
  border-right: 1px solid #000;
  border-bottom: 1px solid #000;
}

.chan-table td {
  padding: 0 2px;
}

td:first-child {
  background-color: #d4d0c8;
  border-right: 2px solid #808080;
  border-bottom-color: #d4d0c8;
}

td:last-child {
  border-right: none;
}

.lap-table td:nth-child(5) {
  padding: 0 1px 0 2px;
}

.lap-table td.delta {
  padding: 0 2px 0 0;
  text-align: right;
  color: #f00;
}

.lap-table td.plain { color: #000; }
.lap-table td.minus { color: #006400; }

.lap-table td.open { border-right-color: transparent; }

.lap-table .best td { font-weight: bold; }

.lap-table td.marked {
  padding: 0 0 0 2px;
  box-shadow: inset 0 0 0 2px #adff2f;
}

.lap-table td.tick,
.chan-table td.tick {
  padding: 0 4px 0 2px;
}

.lap-table td.datum {
  padding-right: 6px;
}

.sort {
  display: inline-block;
  margin-left: 3px;
  border: 4px solid transparent;
  border-top: none;
  border-bottom: 5px solid #808080;
}

.swatch {
  display: block;
  width: 15px;
  height: 13px;
  margin-left: -1px;
}

.swatch.red { background-color: #e41a1c; }
.swatch.blue { background-color: #377eb8; }

input[type="checkbox"] {
  appearance: none;
  display: block;
  width: 12px;
  height: 12px;
  margin: 0 auto;
  background-color: #fff;
  border: 1px solid;
  border-color: #808080 #d4d0c8 #d4d0c8 #808080;
  box-shadow: inset 1px 1px 0 #404040;
}

input[type="checkbox"]:checked::before {
  content: "";
  display: block;
  width: 7px;
  height: 7px;
  margin: 2px;
  background-color: #000;
  clip-path: polygon(0 28%, 35% 62%, 100% 0, 100% 40%, 35% 100%, 0 66%);
}

/* Channel list */
.chan-body {
  flex: 1;
  min-height: 0;
  display: flex;
  flex-direction: column;
  border-top: 1px solid #000;
  padding-bottom: 2px;
}

.chan-main {
  flex: 1;
  min-height: 0;
  display: flex;
}

.chan-clip {
  overflow: hidden;
}

.chan-table td { color: #b8b8b8; }
.chan-table .v1 { color: #f29a9b; }
.chan-table .v2 { color: #9dc0dc; }
.chan-table .live td { color: #000; }
.chan-table .live .v1 { color: #e41a1c; }
.chan-table .live .v2 { color: #377eb8; }

/* Scroll bars */
.vscroll {
  flex: 1;
  max-width: 16px;
  display: flex;
  flex-direction: column;
}

.under-head { padding-top: 22px; margin-bottom: -13px; }
.under-chan { padding-top: 30px; }

.vscroll button,
.hscroll button {
  width: 15px;
  height: 15px;
  flex: none;
  display: flex;
  align-items: center;
  justify-content: center;
}

.vscroll button,
.hscroll button,
.thumb {
  background-color: #d4d0c8;
  border: 1px solid;
  border-color: #fff #606060 #606060 #fff;
}

.vscroll button::before,
.hscroll button::before {
  content: "";
  border: 3px solid transparent;
}

.up::before { border-top: none !important; border-bottom: 4px solid #000 !important; }
.down::before { border-bottom: none !important; border-top: 4px solid #000 !important; }
.left::before { border-left: none !important; border-right: 4px solid #000 !important; }
.right::before { border-right: none !important; border-left: 4px solid #000 !important; }
.off .up::before { border-bottom-color: #808080 !important; }
.off .down::before { border-top-color: #808080 !important; }

.track {
  flex: 1;
  display: flex;
  background-color: #e8e6e2;
}

.lap-track {
  flex-direction: column;
  justify-content: flex-end;
}

.lap-track .thumb { height: 55%; }
.chan-track .thumb { height: 94%; width: 100%; }

.hscroll {
  height: 15px;
  width: 300px;
  padding-left: 7px;
  display: flex;
}

.hscroll .thumb { width: 94%; }

/* Plots */
.plot {
  flex: 1;
  min-height: 0;
  width: 100%;
  font: 11px "DejaVu Sans", Verdana, sans-serif;
  fill: #000;
}

.plot .muted { fill: #808080; }
.plot .mid { text-anchor: middle; }
.plot .end { text-anchor: end; }

.plot path,
.plot rect,
.plot polyline {
  shape-rendering: crispEdges;
}

.grid {
  fill: none;
  stroke: #a0a0a0;
  stroke-dasharray: 3 1;
}

.ticks {
  fill: none;
  stroke: #a0a0a0;
}

.axis,
.label-box,
.map-box {
  fill: none;
  stroke: #000;
}

.label-box { transform: translate(0.5px, 0.5px); }

.trace {
  fill: none;
  stroke-width: 1;
  vector-effect: non-scaling-stroke;
}

.overlap { stroke-dasharray: 6 9; }

.trace.red, .dots.red { stroke: #e41a1c; }
.trace.blue, .dots.blue { stroke: #377eb8; }

.cursor {
  stroke: #000;
  stroke-width: 2;
  stroke-dasharray: 2 2;
}

.marker rect {
  fill: #00f;
  stroke: #000;
}

.marker .start { fill: #0f0; }

/* Bottom dock */
.dock {
  height: 21px;
  flex: none;
  padding-left: 1px;
  border-top: 1px solid #a8a8a4;
  background-color: #535353;
}

.dock button {
  display: block;
  width: 100px;
  height: 20px;
  padding-left: 5px;
  text-align: left;
  font-size: 11px;
  border: 1px solid #000;
  background-color: #d4d0c8;
}

.bottom-edge {
  height: 26px;
  flex: none;
  margin-right: -4px;
  border-bottom: 3px solid #3a6ea5;
}
```

FILE: app.js
```js
// Lap list: lap, time, delta
const laps = [
  ['13', '02:03.82', '+02.22'], ['14', '02:03.12', '+01.52'], ['15', '02:04.48', '+02.89'],
  ['16', '02:03.72', '+02.12'], ['17', '02:02.20', '+00.60'], ['18', '02:02.21', '+00.62'],
  ['19', '02:04.18', '+02.59'], ['20', '02:01.86', '+00.27'], ['21', '02:02.70', '+01.11'],
  ['22', '02:01.59', '00.00', 'red'], ['23', '02:06.74', '+05.14'], ['24', '02:02.40', '+00.81'],
  ['25', '02:29.19', '+27.59'], ['26', '02:33.84', '+32.25'], ['27', '05:03.96', '+03:02.37', 'blue']
];
const foot = [['Ideal', '01:59.36', '-02.22'], ['Fastest', '02:01.59', '00.00', 'red']];

const channels = [
  ['Speed (mph)', '91.454', '35.642'], ['LatAcc (g)', '+0.00', '+0.01'], ['LongAcc (g)', '+0.13', '0.00'],
  ['Combined G (g)', '0.13', '0.03'], ['Delta-T (s)', '0.00', '155.58'], ['Sats', '8', '8'],
  ['UTC Time (s)', '15:32:10.74', '16:03:03.93'], ['Latitude', '52°49.72 N', '52°49.71 N'],
  ['Longitude', '001°22.16 W', '001°22.12 W'], ['Heading (°)', '276.8', '275.1'],
  ['Height (m)', '130.73', '129.63'], ['Vertical vel (mph)', '-', '-'],
  ['Distance (m)', '2450.03', '2450.03'], ['Elapsed time (s)', '70.24', '224.73'],
  ['YAW__ ()', '0.000', '0.000'], ['YAW_ ()', '0.000', '0.000'], ['YAW ()', '0.000', '0.000'],
  ['SLIP ()', '0.000', '0.000']
];

const box = (label, on) => `<input type="checkbox" aria-label="${label}"${on ? ' checked' : ''}>`;

function lapRow([lap, time, delta, color]) {
  const best = delta === '00.00';
  const ideal = lap === 'Ideal';
  const tone = best || color ? 'plain' : delta[0] === '-' ? 'minus' : '';
  return `<tr class="${best ? 'best' : ''}">
    <td></td>
    <td class="tick ${ideal ? 'open' : ''}">${ideal ? '' : box('Show lap ' + lap, color)}</td>
    <td>${color ? `<i class="swatch ${color}"></i>` : ''}</td>
    <td class="${color ? 'marked' : ''}">${lap}</td>
    <td>${time}</td>
    <td class="delta ${tone}">${delta}</td>
    <td class="tick datum">${box('Datum ' + lap, best)}</td>
    <td></td>
  </tr>`;
}

document.getElementById('lap-rows').innerHTML = laps.map(lapRow).join('');
document.getElementById('foot-rows').innerHTML = foot.map(lapRow).join('');
document.getElementById('chan-rows').innerHTML = channels.map(([name, a, b], i) => `<tr class="${i ? '' : 'live'}">
  <td></td><td class="tick">${box('Show ' + name, !i)}</td><td>${name}</td><td class="v1">${a}</td><td class="v2">${b}</td>
</tr>`).join('');

// Speed plot grid
let grid = 'M379 529.5H908';
let ticks = 'M373 173.5h5M373 529.5h5M373 884.5h5';
let labels = '<text x="370" y="177" class="end">105</text><text x="370" y="533" class="end">52.5</text><text x="370" y="888" class="end">0</text>';
for (let m = 0; m < 4000; m += 100) {
  const x = Math.floor(378 + m * 0.1343) + 0.5;
  const major = m % 500 === 0;
  ticks += `M${x} 885v${major ? 5 : 3}`;
  if (!major) continue;
  if (m) grid += `M${x} 174V884`;
  labels += `<text x="${x}" y="902" class="mid">${m.toLocaleString('en-US')}</text>`;
}
document.getElementById('speed-grid').innerHTML =
  `<path class="grid" d="${grid}"/><path class="ticks" d="${ticks}"/><path class="axis" d="M378.5 173.5H908.5V884.5H378.5z"/>${labels}`;

// G-G plot grid
grid = '';
ticks = '';
labels = '';
for (let i = -6; i <= 6; i++) {
  const y = Math.floor(332 - i * 21.2) + 0.5;
  grid += `M1023 ${y}h247`;
  ticks += `M1017 ${y}h5`;
  labels += `<text x="1013" y="${y + 4}" class="end">${+(i * 0.2).toFixed(1)}</text>`;
}
for (let i = -1; i <= 1; i++) {
  const x = Math.floor(1146 + i * 98.7) + 0.5;
  grid += `M${x} 200V465`;
  ticks += `M${x} 466v5`;
  labels += `<text x="${x}" y="483" class="mid">${i}</text>`;
}
for (let i = 0; i <= 50; i++) ticks += `M1019 ${Math.floor(200 + i * 5.3) + 0.5}h3`;
for (let i = 0; i <= 10; i++) ticks += `M${Math.floor(1023 + i * 24.7) + 0.5} 466v3`;
document.getElementById('gg-grid').innerHTML =
  `<path class="grid" d="${grid}"/><path class="ticks" d="${ticks}"/><path class="axis" d="M1022.5 199.5H1270.5V465.5H1022.5zM1023.5 200V464.5H1270"/>${labels}`;

// G-G samples, as runs of [x0, y0, x1, y1, spread, count]
const redRuns = [
  [285, 545, 345, 515, 22, 70], [230, 560, 285, 545, 24, 26], [345, 520, 410, 522, 12, 40], [410, 525, 560, 520, 12, 40],
  [330, 508, 420, 490, 6, 10], [430, 492, 550, 495, 10, 16], [545, 510, 580, 525, 18, 150], [560, 530, 580, 560, 24, 90],
  [545, 495, 590, 500, 14, 20], [560, 540, 600, 545, 18, 60], [600, 540, 630, 545, 8, 25], [640, 545, 650, 570, 12, 14],
  [650, 530, 740, 550, 16, 14], [640, 560, 760, 570, 14, 26], [755, 560, 800, 575, 20, 50], [800, 575, 880, 590, 20, 22],
  [790, 510, 860, 550, 14, 16], [795, 515, 805, 530, 10, 12], [600, 488, 720, 478, 6, 8], [730, 480, 810, 500, 6, 5],
  [860, 560, 900, 550, 12, 8], [870, 590, 880, 610, 8, 10], [880, 560, 840, 650, 12, 14], [835, 640, 840, 730, 12, 24],
  [790, 735, 810, 700, 12, 12], [720, 785, 790, 735, 8, 4], [630, 810, 700, 770, 20, 6], [205, 620, 235, 590, 12, 10],
  [240, 640, 280, 640, 18, 20], [250, 665, 275, 670, 18, 20], [265, 690, 330, 770, 8, 12], [330, 765, 380, 790, 12, 10],
  [370, 790, 400, 815, 14, 16], [400, 815, 440, 835, 16, 10], [330, 560, 390, 640, 30, 12], [300, 690, 400, 740, 30, 6],
  [440, 800, 540, 800, 22, 12], [540, 770, 555, 820, 16, 26], [500, 880, 520, 900, 12, 8], [505, 895, 540, 920, 6, 5],
  [555, 860, 565, 910, 10, 24], [565, 840, 600, 890, 10, 8], [555, 680, 560, 770, 16, 10], [630, 860, 690, 690, 10, 4],
  [430, 560, 520, 660, 30, 6]
];
const blueRuns = [
  [365, 540, 430, 530, 14, 60], [430, 525, 530, 520, 8, 40], [290, 540, 350, 545, 14, 16], [245, 555, 260, 600, 16, 22],
  [260, 600, 290, 580, 14, 8], [440, 575, 450, 600, 20, 35], [450, 600, 530, 600, 10, 20], [500, 578, 530, 580, 14, 90],
  [500, 580, 620, 580, 8, 150], [562, 530, 564, 612, 9, 240], [548, 580, 580, 595, 22, 220], [540, 560, 600, 560, 20, 40],
  [560, 655, 563, 692, 3, 40], [560, 620, 562, 655, 4, 6], [475, 670, 500, 710, 22, 36], [500, 700, 530, 750, 16, 14],
  [450, 740, 465, 755, 12, 12], [440, 680, 480, 760, 28, 14], [400, 745, 440, 780, 18, 8], [350, 800, 380, 780, 14, 12],
  [545, 790, 555, 870, 8, 18], [290, 620, 360, 670, 12, 8], [360, 670, 440, 700, 16, 5], [800, 535, 850, 560, 20, 10],
  [820, 625, 860, 630, 18, 14], [600, 600, 680, 620, 24, 5], [860, 600, 900, 580, 14, 5], [500, 640, 540, 670, 26, 8],
  [575, 680, 590, 690, 8, 6]
];

let seed = 7;
function rand() {
  seed = (seed * 16807) % 2147483647;
  return seed / 2147483647;
}

function dots(runs) {
  let d = '';
  for (const [x0, y0, x1, y1, spread, n] of runs) {
    for (let i = 0; i < n; i++) {
      const t = rand();
      const x = Math.round(960 + (x0 + (x1 - x0) * t + (rand() + rand() - 1) * spread) / 3);
      const y = Math.round(138 + (y0 + (y1 - y0) * t + (rand() + rand() - 1) * spread) / 3) + 0.5;
      d += `M${x} ${y}h1m0 1h1`;
    }
  }
  return d;
}

document.getElementById('gg-red').setAttribute('d', dots(redRuns));
document.getElementById('gg-blue').setAttribute('d', dots(blueRuns));
```
